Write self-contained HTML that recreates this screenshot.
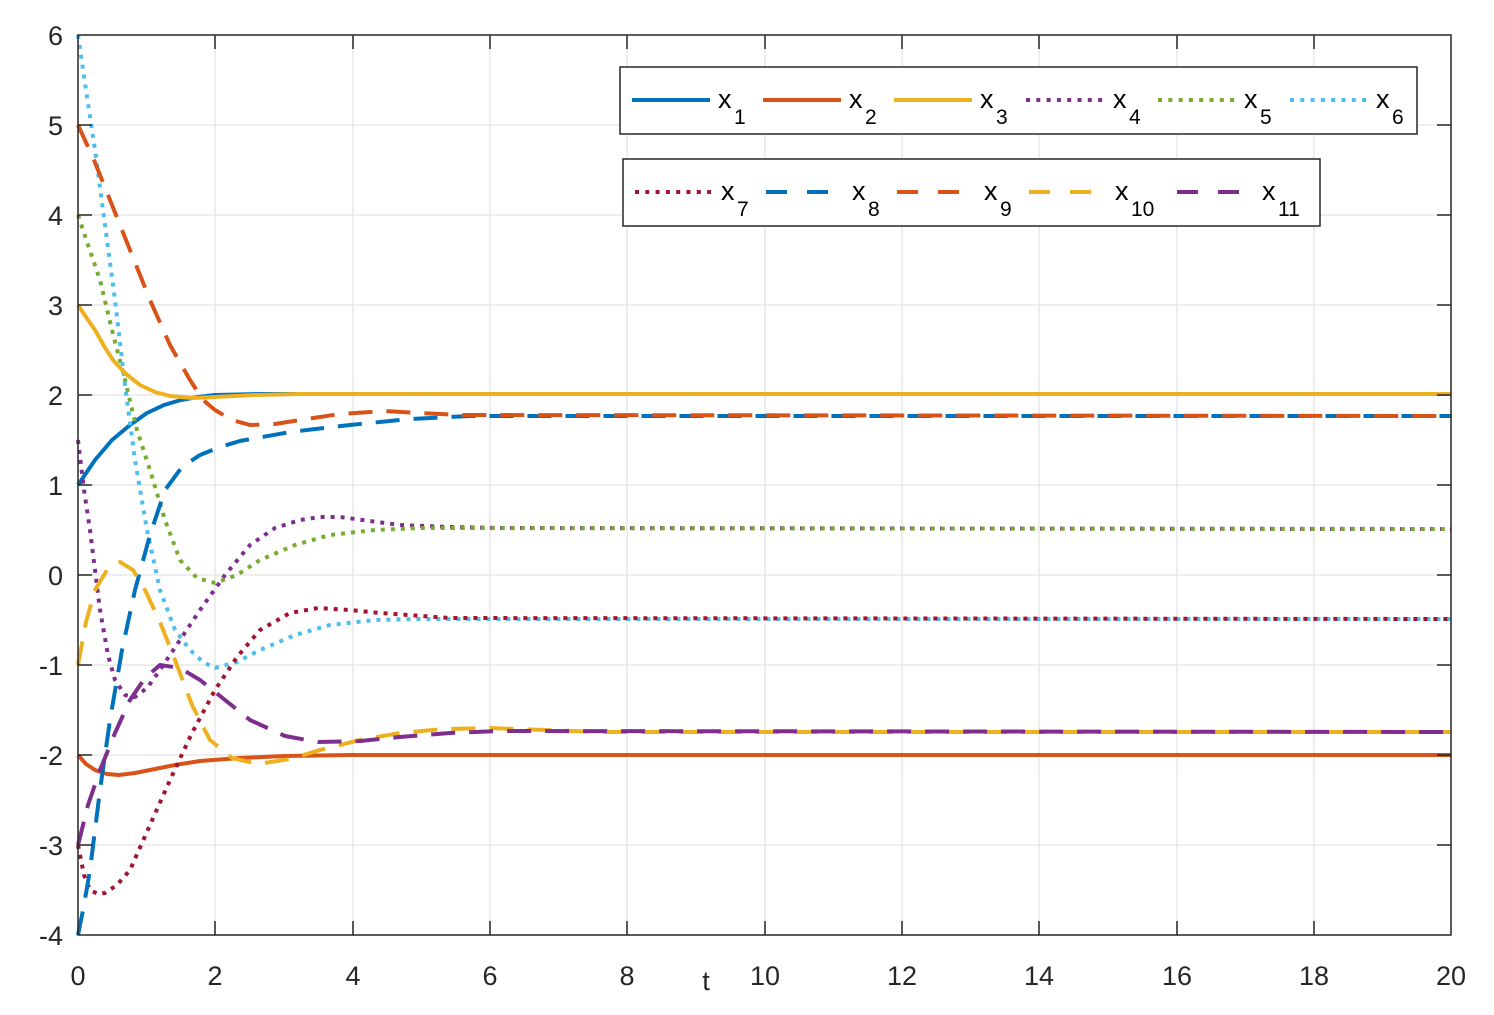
<!DOCTYPE html>
<html><head><meta charset="utf-8"><style>
html,body{margin:0;padding:0;background:#fff;}
svg{display:block;font-family:"Liberation Sans",sans-serif;}
</style></head><body>
<svg width="1494" height="1015" viewBox="0 0 1494 1015" xmlns="http://www.w3.org/2000/svg">
<rect width="1494" height="1015" fill="#fff"/>
<g stroke="#e3e3e3" stroke-width="1.3">
<line x1="215" y1="35" x2="215" y2="935"/><line x1="353" y1="35" x2="353" y2="935"/>
<line x1="490" y1="35" x2="490" y2="935"/><line x1="627" y1="35" x2="627" y2="935"/>
<line x1="765" y1="35" x2="765" y2="935"/><line x1="902" y1="35" x2="902" y2="935"/>
<line x1="1039" y1="35" x2="1039" y2="935"/><line x1="1177" y1="35" x2="1177" y2="935"/>
<line x1="1314" y1="35" x2="1314" y2="935"/>
<line x1="78" y1="125" x2="1451" y2="125"/><line x1="78" y1="215" x2="1451" y2="215"/>
<line x1="78" y1="305" x2="1451" y2="305"/><line x1="78" y1="395" x2="1451" y2="395"/>
<line x1="78" y1="485" x2="1451" y2="485"/><line x1="78" y1="575" x2="1451" y2="575"/>
<line x1="78" y1="665" x2="1451" y2="665"/><line x1="78" y1="755" x2="1451" y2="755"/>
<line x1="78" y1="845" x2="1451" y2="845"/>
</g>
<g fill="none" stroke-width="4" stroke-linejoin="round">
<polyline stroke="#0072BD" points="78,485 95,460 112,440 130,425 147,413 164,405 181,400 198,397 215,395 260,394 1451,394"/>
<polyline stroke="#D95319" points="78,755 86,764 95,770 107,774 119,775 135,773 150,770 175,765 200,761 240,758 285,756 350,755 1451,755"/>
<polyline stroke="#7E2F8E" stroke-dasharray="4 6" points="78,440 84,490 90,530 100,610 108,655 115,680 125,695 135,697 147,688 160,670 180,640 200,610 225,575 250,545 275,528 300,520 320,517 340,517 370,521 400,525 450,527 500,528 1451,529"/>
<polyline stroke="#77AC30" stroke-dasharray="4 6" points="78,215 88,245 100,280 112,330 125,380 137,430 150,470 165,520 180,560 197,578 215,583 237,575 260,560 295,545 330,535 375,530 420,528 1451,529"/>
<polyline stroke="#4DBEEE" stroke-dasharray="4 6" points="78,35 86,90 95,150 105,225 115,300 125,385 135,460 147,530 160,590 175,630 190,650 203,662 215,668 237,662 260,650 295,635 330,625 375,620 420,619 1451,619"/>
<polyline stroke="#A2142F" stroke-dasharray="4 6" points="78,845 84,875 90,890 98,894 105,893 117,885 130,870 150,825 170,780 192,733 215,690 237,657 260,630 290,613 318,608 350,610 380,613 450,618 1451,619"/>
<polyline stroke="#0072BD" stroke-dasharray="24 14" points="78,935 84,905 90,870 100,790 110,720 122,650 135,590 150,535 165,490 182,467 200,455 220,447 240,441 290,432 350,425 410,419 470,416 1451,416"/>
<polyline stroke="#D95319" stroke-dasharray="24 14" points="78,125 94,160 110,200 130,250 150,300 170,345 190,380 203,400 215,410 232,420 250,425 275,424 300,420 340,414 385,411 420,413 460,415 1451,416"/>
<polyline stroke="#EDB120" stroke-dasharray="24 14" points="78,665 86,622 95,590 107,570 120,562 133,570 145,590 160,622 175,660 192,705 210,740 232,758 258,764 290,759 320,750 360,740 400,733 445,729 490,728 545,730 600,732 1451,732"/>
<polyline stroke="#7E2F8E" stroke-dasharray="24 14" points="78,845 88,805 100,770 115,733 130,700 145,678 160,665 180,668 200,680 225,700 250,720 285,736 318,742 360,741 400,737 450,733 500,731 1451,732"/>
<polyline stroke="#EDB120" points="78,305 86,317 95,330 104,346 113,360 126,374 140,385 155,392 170,396 192,398 215,397 255,395 300,394 1451,394"/>
</g>
<rect x="78" y="35" width="1373" height="900" fill="none" stroke="#262626" stroke-width="1.5"/>
<g stroke="#262626" stroke-width="1.5">
<path d="M215 935v-14M353 935v-14M490 935v-14M627 935v-14M765 935v-14M902 935v-14M1039 935v-14M1177 935v-14M1314 935v-14"/>
<path d="M215 35v14M353 35v14M490 35v14M627 35v14M765 35v14M902 35v14M1039 35v14M1177 35v14M1314 35v14"/>
<path d="M78 125h14M78 215h14M78 305h14M78 395h14M78 485h14M78 575h14M78 665h14M78 755h14M78 845h14"/>
<path d="M1451 125h-14M1451 215h-14M1451 305h-14M1451 395h-14M1451 485h-14M1451 575h-14M1451 665h-14M1451 755h-14M1451 845h-14"/>
</g>
<g font-size="27" fill="#262626" text-anchor="middle">
<text x="78" y="985">0</text><text x="215" y="985">2</text><text x="353" y="985">4</text><text x="490" y="985">6</text><text x="627" y="985">8</text><text x="765" y="985">10</text><text x="902" y="985">12</text><text x="1039" y="985">14</text><text x="1177" y="985">16</text><text x="1314" y="985">18</text><text x="1451" y="985">20</text>
<text x="706" y="990">t</text>
</g>
<g font-size="27" fill="#262626" text-anchor="end">
<text x="63" y="45">6</text><text x="63" y="135">5</text><text x="63" y="225">4</text><text x="63" y="315">3</text><text x="63" y="405">2</text><text x="63" y="495">1</text><text x="63" y="585">0</text><text x="63" y="675">-1</text><text x="63" y="765">-2</text><text x="63" y="855">-3</text><text x="63" y="945">-4</text>
</g>
<rect x="620" y="67" width="797" height="67" fill="#fff" stroke="#262626" stroke-width="1.5"/>
<rect x="623" y="159" width="697" height="67" fill="#fff" stroke="#262626" stroke-width="1.5"/>
<g stroke-width="4" fill="none">
<line x1="632" y1="100" x2="710" y2="100" stroke="#0072BD"/>
<line x1="763" y1="100" x2="841" y2="100" stroke="#D95319"/>
<line x1="894" y1="100" x2="972" y2="100" stroke="#EDB120"/>
<line x1="1026" y1="100" x2="1104" y2="100" stroke="#7E2F8E" stroke-dasharray="4 6.3"/>
<line x1="1158" y1="100" x2="1236" y2="100" stroke="#77AC30" stroke-dasharray="4 6.3"/>
<line x1="1290" y1="100" x2="1368" y2="100" stroke="#4DBEEE" stroke-dasharray="4 6.3"/>
<line x1="635" y1="192" x2="713" y2="192" stroke="#A2142F" stroke-dasharray="4 6.3"/>
<line x1="766" y1="192" x2="844" y2="192" stroke="#0072BD" stroke-dasharray="21 20"/>
<line x1="897" y1="192" x2="975" y2="192" stroke="#D95319" stroke-dasharray="21 20"/>
<line x1="1029" y1="192" x2="1107" y2="192" stroke="#EDB120" stroke-dasharray="21 20"/>
<line x1="1177" y1="192" x2="1255" y2="192" stroke="#7E2F8E" stroke-dasharray="21 20"/>
</g>
<g font-size="27" fill="#000">
<text x="718" y="108">x</text><text x="734" y="124" font-size="21">1</text>
<text x="849" y="108">x</text><text x="865" y="124" font-size="21">2</text>
<text x="980" y="108">x</text><text x="996" y="124" font-size="21">3</text>
<text x="1113" y="108">x</text><text x="1129" y="124" font-size="21">4</text>
<text x="1244" y="108">x</text><text x="1260" y="124" font-size="21">5</text>
<text x="1376" y="108">x</text><text x="1392" y="124" font-size="21">6</text>
<text x="721" y="200">x</text><text x="737" y="216" font-size="21">7</text>
<text x="852" y="200">x</text><text x="868" y="216" font-size="21">8</text>
<text x="984" y="200">x</text><text x="1000" y="216" font-size="21">9</text>
<text x="1115" y="200">x</text><text x="1131" y="216" font-size="21">10</text>
<text x="1262" y="200">x</text><text x="1278" y="216" font-size="21">11</text>
</g>
</svg>
</body></html>
